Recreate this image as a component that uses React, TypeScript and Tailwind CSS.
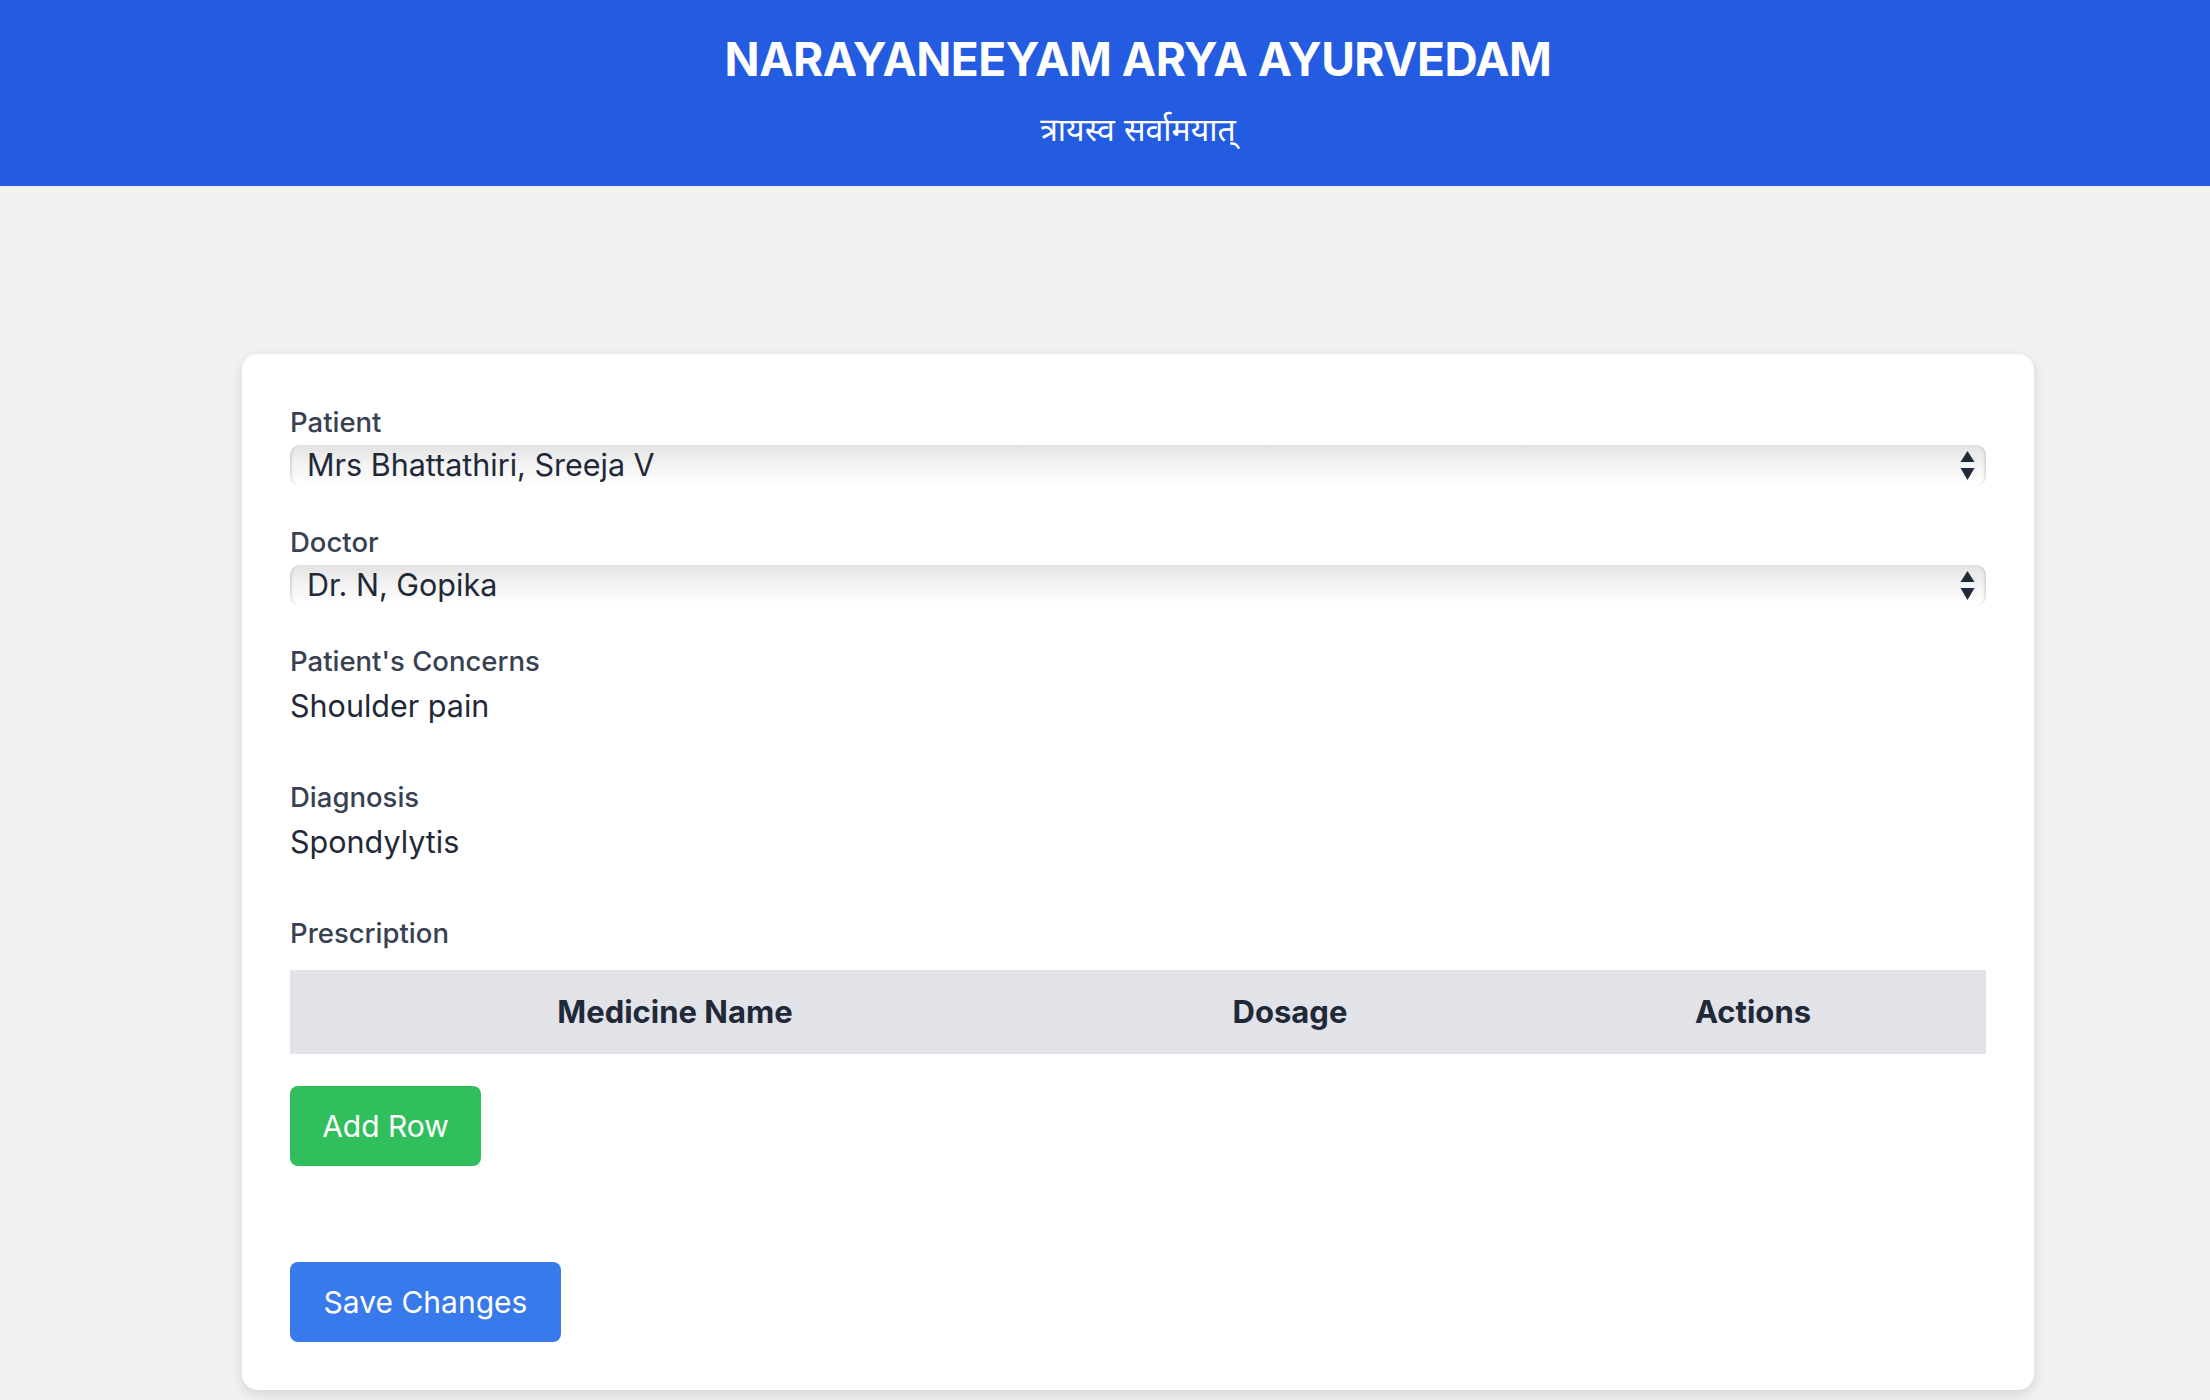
import React from "react";

function SelectArrows() {
  return (
    <svg className="w-[15px] h-[29px]" viewBox="0 0 15 29" fill="#1f2937">
      <path d="M7.5 0 L14.5 11 H0.5 Z" />
      <path d="M0.5 17 H14.5 L7.5 29 Z" />
    </svg>
  );
}

function FakeSelect({ value }: { value: string }) {
  return (
    <div className="flex items-center justify-between h-[41px] pl-[17px] pr-[11px] rounded-[10px] bg-linear-to-b from-[#e3e3e3] via-[#f4f4f4] to-white shadow-[inset_3px_0_3px_-2px_rgba(0,0,0,0.18),inset_-3px_0_3px_-2px_rgba(0,0,0,0.18)]">
      <span className="text-[30.5px] text-[#1f2937] leading-none">{value}</span>
      <SelectArrows />
    </div>
  );
}

function Label({ children }: { children: React.ReactNode }) {
  return (
    <div className="text-[27.5px] leading-[32px] font-medium text-[#374151]">
      {children}
    </div>
  );
}

export default function App() {
  return (
    <div
      className="w-full min-h-screen overflow-hidden bg-[#f0f1f3]"
      style={{ fontFamily: "Inter, 'Noto Sans', 'Noto Sans Devanagari', sans-serif" }}
    >
      <div className="w-[2276px]">
        {/* Header */}
        <header className="bg-[#245ce1] text-white text-center h-[186px] pt-[27px]">
          <h1 className="text-[46px] leading-[64px] font-bold tracking-[-0.5px]">
            NARAYANEEYAM ARYA AYURVEDAM
          </h1>
          <p className="mt-[17px] text-[32px] leading-[44px]">त्रायस्व सर्वामयात्</p>
        </header>

        {/* Form card */}
        <div className="mx-auto mt-[168px] mb-[40px] w-[1792px] bg-white rounded-[16px] shadow-[0_4px_12px_rgba(0,0,0,0.12)] p-[48px] pt-[52px]">
          <Label>Patient</Label>
          <div className="mt-[7px]">
            <FakeSelect value="Mrs Bhattathiri, Sreeja V" />
          </div>

          <div className="mt-[40px]">
            <Label>Doctor</Label>
            <div className="mt-[7px]">
              <FakeSelect value="Dr. N, Gopika" />
            </div>
          </div>

          <div className="mt-[39px]">
            <Label>Patient's Concerns</Label>
            <div className="mt-[9px] text-[30.5px] leading-[40px] text-[#1f2937]">Shoulder pain</div>
          </div>

          <div className="mt-[55px]">
            <Label>Diagnosis</Label>
            <div className="mt-[9px] text-[30.5px] leading-[40px] text-[#1f2937]">Spondylytis</div>
          </div>

          <div className="mt-[55px]">
            <Label>Prescription</Label>
            <div className="mt-[21px] grid grid-cols-[770px_460px_1fr] h-[84px] items-center bg-[#e1e3e8] text-[31px] font-bold text-[#1f2937] text-center">
              <div>Medicine Name</div>
              <div>Dosage</div>
              <div>Actions</div>
            </div>
            <button className="mt-[32px] h-[80px] w-[191px] rounded-[8px] bg-[#31bf5d] text-white text-[30px]">
              Add Row
            </button>
          </div>

          <button className="mt-[96px] h-[80px] w-[271px] rounded-[8px] bg-[#3879ec] text-white text-[30px]">
            Save Changes
          </button>
        </div>
      </div>
    </div>
  );
}
